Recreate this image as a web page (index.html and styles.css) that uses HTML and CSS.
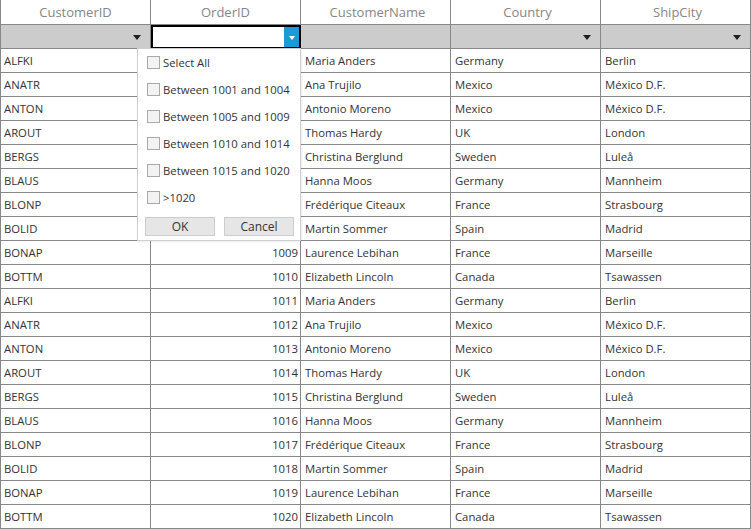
FILE: index.html
```html
<!DOCTYPE html>
<html>
<head>
<meta charset="utf-8">
<link rel="stylesheet" href="styles.css">
</head>
<body>
<div class="grid">
  <div class="row head">
    <div class="cell">CustomerID</div>
    <div class="cell">OrderID</div>
    <div class="cell">CustomerName</div>
    <div class="cell">Country</div>
    <div class="cell">ShipCity</div>
  </div>
  <div class="row filter">
    <div class="cell"><span class="tri"></span></div>
    <div class="cell active"><span class="btn"><span class="tri white"></span></span></div>
    <div class="cell"></div>
    <div class="cell"><span class="tri"></span></div>
    <div class="cell"><span class="tri"></span></div>
  </div>
  <div class="row"><div class="cell">ALFKI</div><div class="cell num"></div><div class="cell">Maria Anders</div><div class="cell">Germany</div><div class="cell">Berlin</div></div>
  <div class="row"><div class="cell">ANATR</div><div class="cell num"></div><div class="cell">Ana Trujilo</div><div class="cell">Mexico</div><div class="cell">México D.F.</div></div>
  <div class="row"><div class="cell">ANTON</div><div class="cell num"></div><div class="cell">Antonio Moreno</div><div class="cell">Mexico</div><div class="cell">México D.F.</div></div>
  <div class="row"><div class="cell">AROUT</div><div class="cell num"></div><div class="cell">Thomas Hardy</div><div class="cell">UK</div><div class="cell">London</div></div>
  <div class="row"><div class="cell">BERGS</div><div class="cell num"></div><div class="cell">Christina Berglund</div><div class="cell">Sweden</div><div class="cell">Luleå</div></div>
  <div class="row"><div class="cell">BLAUS</div><div class="cell num"></div><div class="cell">Hanna Moos</div><div class="cell">Germany</div><div class="cell">Mannheim</div></div>
  <div class="row"><div class="cell">BLONP</div><div class="cell num"></div><div class="cell">Frédérique Citeaux</div><div class="cell">France</div><div class="cell">Strasbourg</div></div>
  <div class="row"><div class="cell">BOLID</div><div class="cell num"></div><div class="cell">Martin Sommer</div><div class="cell">Spain</div><div class="cell">Madrid</div></div>
  <div class="row"><div class="cell">BONAP</div><div class="cell num">1009</div><div class="cell">Laurence Lebihan</div><div class="cell">France</div><div class="cell">Marseille</div></div>
  <div class="row"><div class="cell">BOTTM</div><div class="cell num">1010</div><div class="cell">Elizabeth Lincoln</div><div class="cell">Canada</div><div class="cell">Tsawassen</div></div>
  <div class="row"><div class="cell">ALFKI</div><div class="cell num">1011</div><div class="cell">Maria Anders</div><div class="cell">Germany</div><div class="cell">Berlin</div></div>
  <div class="row"><div class="cell">ANATR</div><div class="cell num">1012</div><div class="cell">Ana Trujilo</div><div class="cell">Mexico</div><div class="cell">México D.F.</div></div>
  <div class="row"><div class="cell">ANTON</div><div class="cell num">1013</div><div class="cell">Antonio Moreno</div><div class="cell">Mexico</div><div class="cell">México D.F.</div></div>
  <div class="row"><div class="cell">AROUT</div><div class="cell num">1014</div><div class="cell">Thomas Hardy</div><div class="cell">UK</div><div class="cell">London</div></div>
  <div class="row"><div class="cell">BERGS</div><div class="cell num">1015</div><div class="cell">Christina Berglund</div><div class="cell">Sweden</div><div class="cell">Luleå</div></div>
  <div class="row"><div class="cell">BLAUS</div><div class="cell num">1016</div><div class="cell">Hanna Moos</div><div class="cell">Germany</div><div class="cell">Mannheim</div></div>
  <div class="row"><div class="cell">BLONP</div><div class="cell num">1017</div><div class="cell">Frédérique Citeaux</div><div class="cell">France</div><div class="cell">Strasbourg</div></div>
  <div class="row"><div class="cell">BOLID</div><div class="cell num">1018</div><div class="cell">Martin Sommer</div><div class="cell">Spain</div><div class="cell">Madrid</div></div>
  <div class="row"><div class="cell">BONAP</div><div class="cell num">1019</div><div class="cell">Laurence Lebihan</div><div class="cell">France</div><div class="cell">Marseille</div></div>
  <div class="row"><div class="cell">BOTTM</div><div class="cell num">1020</div><div class="cell">Elizabeth Lincoln</div><div class="cell">Canada</div><div class="cell">Tsawassen</div></div>

  <div class="popup">
    <ul class="opts">
      <li><span class="cb"></span>Select All</li>
      <li><span class="cb"></span>Between 1001 and 1004</li>
      <li><span class="cb"></span>Between 1005 and 1009</li>
      <li><span class="cb"></span>Between 1010 and 1014</li>
      <li><span class="cb"></span>Between 1015 and 1020</li>
      <li><span class="cb"></span>&gt;1020</li>
    </ul>
    <div class="actions">
      <button class="pbtn">OK</button>
      <button class="pbtn">Cancel</button>
    </div>
  </div>
</div>
</body>
</html>
```
FILE: styles.css
```css
html, body {
  margin: 0;
  padding: 0;
  background: #fff;
}
body {
  font-family: "Open Sans", "Noto Sans", sans-serif;
  font-size: 11.3px;
  color: #333;
}
.grid {
  position: relative;
  width: 751px;
  border-left: 1px solid #888;
  box-sizing: border-box;
}
.row {
  display: grid;
  grid-template-columns: repeat(5, 150px);
  height: 24px;
  border-bottom: 1px solid #888;
  box-sizing: border-box;
}
.cell {
  border-right: 1px solid #888;
  box-sizing: border-box;
  display: flex;
  align-items: center;
  padding: 0 4px 1px 3px;
  white-space: nowrap;
  overflow: hidden;
}
.row .cell:nth-child(n+3) {
  padding-left: 4px;
}
.cell.num {
  justify-content: flex-end;
  padding-right: 2px;
}
.head {
  height: 25px;
}
.head .cell {
  justify-content: center;
  color: #868686;
  font-size: 13px;
  padding: 0 0 1px 0;
}
.filter {
  background: #cccccc;
}
.filter .cell {
  justify-content: flex-end;
  padding: 0 9px 0 0;
}
.tri {
  display: block;
  width: 0;
  height: 0;
  border-left: 4px solid transparent;
  border-right: 4px solid transparent;
  border-top: 5px solid #1e1e1e;
  margin-top: 1px;
}
.tri.white {
  border-left-width: 3px;
  border-right-width: 3px;
  border-top: 4px solid #fff;
}
.filter .cell.active {
  background: #fff;
  border: 2px solid #000;
  border-bottom-width: 1px;
  padding: 0;
  align-items: stretch;
}
.btn {
  width: 15px;
  background: #1b9ad8;
  display: flex;
  align-items: center;
  justify-content: center;
}
.popup {
  position: absolute;
  left: 136px;
  top: 48px;
  width: 164px;
  height: 193px;
  background: #fff;
  border: 1px solid #cfcfcf;
  box-sizing: border-box;
  box-shadow: 1px 1px 2px rgba(0,0,0,0.08);
  padding: 6px 6px 0 7px;
}
.opts {
  list-style: none;
  margin: 0;
  padding: 0 0 0 2px;
}
.opts li {
  display: flex;
  align-items: center;
  height: 15px;
  margin-bottom: 12px;
  color: #333;
  white-space: nowrap;
}
.cb {
  display: block;
  flex: 0 0 13px;
  width: 13px;
  height: 13px;
  border: 1px solid #a9a9a9;
  background: #f3f3f3;
  box-sizing: border-box;
  margin-right: 3px;
}
.actions {
  display: flex;
  justify-content: space-between;
}
.pbtn {
  width: 70px;
  height: 19px;
  border: 1px solid #cdcdcd;
  background: #e6e6e6;
  font-family: "Open Sans", "Noto Sans", sans-serif;
  font-size: 12px;
  color: #333;
  padding: 0;
  line-height: 16px;
}
```
